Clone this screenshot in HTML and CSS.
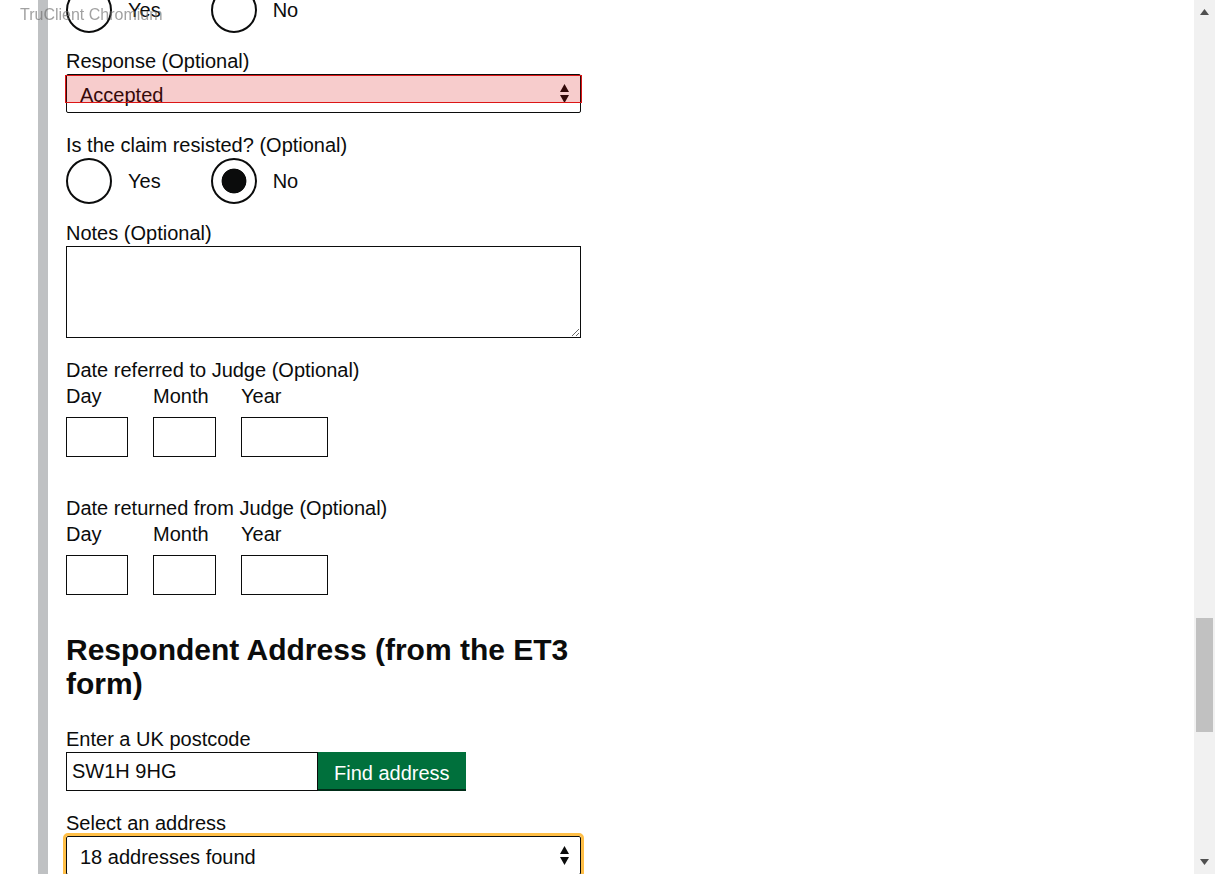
FILE: index.html
```html
<!DOCTYPE html>
<html lang="en">
<head>
<meta charset="utf-8">
<title>Respondent details</title>
<link rel="stylesheet" href="styles.css">
</head>
<body>
<div class="viewport">
  <div class="panel">
    <div class="radios gap-after-radios">
      <label class="radio"><input class="radio-input" type="radio" name="q1"><span>Yes</span></label>
      <label class="radio"><input class="radio-input" type="radio" name="q1"><span>No</span></label>
    </div>

    <div class="form-group">
      <label class="label" for="response">Response (Optional)</label>
      <div class="select-wrap">
        <select class="select" id="response"><option>Accepted</option></select>
        <svg class="select-arrow" viewBox="0 0 9 19" aria-hidden="true"><polygon points="4.5,0 9,8 0,8"/><polygon points="0,11 9,11 4.5,19"/></svg>
        <div class="highlight"></div>
      </div>
    </div>

    <div class="form-group gap-after-radios-2">
      <span class="label">Is the claim resisted? (Optional)</span>
      <div class="radios">
        <label class="radio"><input class="radio-input" type="radio" name="q2"><span>Yes</span></label>
        <label class="radio"><input class="radio-input" type="radio" name="q2" checked><span>No</span></label>
      </div>
    </div>

    <div class="form-group">
      <label class="label" for="notes">Notes (Optional)</label>
      <textarea class="textarea" id="notes"></textarea>
    </div>

    <div class="form-group date-group">
      <span class="label">Date referred to Judge (Optional)</span>
      <div class="date-inputs">
        <div class="date-item"><span class="label sublabel">Day</span><input class="input input-day" type="text"></div>
        <div class="date-item"><span class="label sublabel">Month</span><input class="input input-month" type="text"></div>
        <div class="date-item"><span class="label sublabel">Year</span><input class="input input-year" type="text"></div>
      </div>
    </div>

    <div class="form-group date-group date-group-last">
      <span class="label">Date returned from Judge (Optional)</span>
      <div class="date-inputs">
        <div class="date-item"><span class="label sublabel">Day</span><input class="input input-day" type="text"></div>
        <div class="date-item"><span class="label sublabel">Month</span><input class="input input-month" type="text"></div>
        <div class="date-item"><span class="label sublabel">Year</span><input class="input input-year" type="text"></div>
      </div>
    </div>

    <h2 class="heading">Respondent Address (from the ET3 form)</h2>

    <div class="form-group">
      <label class="label" for="postcode">Enter a UK postcode</label>
      <div class="postcode-row">
        <input class="input input-postcode" id="postcode" type="text" value="SW1H 9HG">
        <button class="button" type="button">Find address</button>
      </div>
    </div>

    <div class="form-group">
      <label class="label" for="address">Select an address</label>
      <div class="select-wrap">
        <select class="select select-focused" id="address"><option>18 addresses found</option></select>
        <svg class="select-arrow" viewBox="0 0 9 19" aria-hidden="true"><polygon points="4.5,0 9,8 0,8"/><polygon points="0,11 9,11 4.5,19"/></svg>
      </div>
    </div>
  </div>
</div>

<div class="scrollbar">
  <svg class="sb-arrow sb-up" viewBox="0 0 9 6" aria-hidden="true"><polygon points="4.5,0 9,6 0,6"/></svg>
  <div class="sb-thumb"></div>
  <svg class="sb-arrow sb-down" viewBox="0 0 9 6" aria-hidden="true"><polygon points="0,0 9,0 4.5,6"/></svg>
</div>

<div class="tc-label">TruClient Chromium</div>
</body>
</html>
```

FILE: styles.css
```css
html, body {
  margin: 0;
  padding: 0;
  height: 874px;
  overflow: hidden;
  background: #fff;
}

body {
  display: flex;
  font-family: "Liberation Sans", Arial, sans-serif;
  color: #0b0c0c;
  font-size: 20px;
}

.viewport {
  flex: 1;
  height: 874px;
  overflow: hidden;
}

.panel {
  margin: -13px 0 0 38px;
  border-left: 10px solid #bfc1c3;
  padding: 0 0 60px 18px;
  width: 515px;
}

.form-group {
  margin-bottom: 20px;
}

.gap-after-radios {
  margin-bottom: 16px;
}

.gap-after-radios-2 {
  margin-bottom: 17px;
}

.label {
  display: block;
  font-size: 20px;
  line-height: 25px;
}

.radios {
  display: flex;
  gap: 50px;
  height: 46px;
}

.radio {
  display: flex;
  align-items: center;
  gap: 16px;
  font-size: 20px;
  line-height: 25px;
}

.radio-input {
  appearance: none;
  -webkit-appearance: none;
  margin: 0;
  width: 46px;
  height: 46px;
  box-sizing: border-box;
  border: 2px solid #0b0c0c;
  border-radius: 50%;
  background: #fff;
  flex: none;
}

.radio-input:checked {
  background: radial-gradient(circle, #0b0c0c 0, #0b0c0c 12px, #fff 12.8px);
}

.select-wrap {
  position: relative;
  width: 515px;
}

.select {
  appearance: none;
  -webkit-appearance: none;
  display: block;
  width: 515px;
  height: 39px;
  box-sizing: border-box;
  margin: 0;
  border: 1px solid #0b0c0c;
  border-radius: 2px;
  padding: 2px 30px 0 13px;
  background: #fff;
  color: #0b0c0c;
  font-family: inherit;
  font-size: 20px;
}

.select-focused {
  outline: 3px solid #ffbf47;
  outline-offset: 0;
}

.select-arrow {
  position: absolute;
  right: 12px;
  top: 10px;
  width: 9px;
  height: 19px;
  fill: #0b0c0c;
  pointer-events: none;
}

.highlight {
  position: absolute;
  left: -1px;
  top: 1px;
  width: 517px;
  height: 28px;
  box-sizing: border-box;
  border: 1px solid #dc1515;
  background: rgba(215, 0, 0, 0.2);
  pointer-events: none;
}

.textarea {
  display: block;
  width: 515px;
  height: 92px;
  box-sizing: border-box;
  margin: 0;
  border: 1px solid #0b0c0c;
  padding: 5px;
  font-family: inherit;
  font-size: 20px;
}

.date-group {
  margin-bottom: 39px;
}

.date-group-last {
  margin-bottom: 38px;
}

.date-inputs {
  display: flex;
  gap: 25px;
}

.date-item {
  display: flex;
  flex-direction: column;
}

.sublabel {
  padding-top: 1px;
  margin-bottom: 8px;
}

.input {
  display: block;
  box-sizing: border-box;
  margin: 0;
  height: 40px;
  border: 1px solid #0b0c0c;
  border-radius: 0;
  padding: 0 5px;
  font-family: inherit;
  font-size: 20px;
  color: #0b0c0c;
  background: #fff;
}

.input-day { width: 62px; }
.input-month { width: 63px; }
.input-year { width: 87px; }

.heading {
  margin: 0 0 26px;
  font-size: 30px;
  font-weight: 700;
  line-height: 34px;
}

.postcode-row {
  display: flex;
  align-items: flex-start;
}

.input-postcode {
  width: 252px;
  height: 39px;
}

.button {
  height: 37px;
  margin: 0;
  border: 0;
  border-radius: 0;
  padding: 9px 16px 3px;
  background: #00703c;
  box-shadow: 0 2px 0 #002d18;
  color: #fff;
  font-family: inherit;
  font-size: 20px;
  line-height: 25px;
}

.scrollbar {
  width: 21px;
  height: 874px;
  background: #f1f1f1;
  display: flex;
  flex-direction: column;
  align-items: center;
}

.sb-arrow {
  width: 9px;
  height: 6px;
  fill: #505050;
  flex: none;
}

.sb-up {
  margin-top: 9px;
}

.sb-thumb {
  width: 17px;
  height: 114px;
  margin-top: 603px;
  background: #c1c1c1;
  flex: none;
}

.sb-down {
  margin-top: auto;
  margin-bottom: 9px;
}

.tc-label {
  position: fixed;
  top: 6px;
  left: 20px;
  font-family: "Liberation Sans", Arial, sans-serif;
  font-size: 16px;
  color: rgba(110, 110, 110, 0.65);
  pointer-events: none;
}
```
